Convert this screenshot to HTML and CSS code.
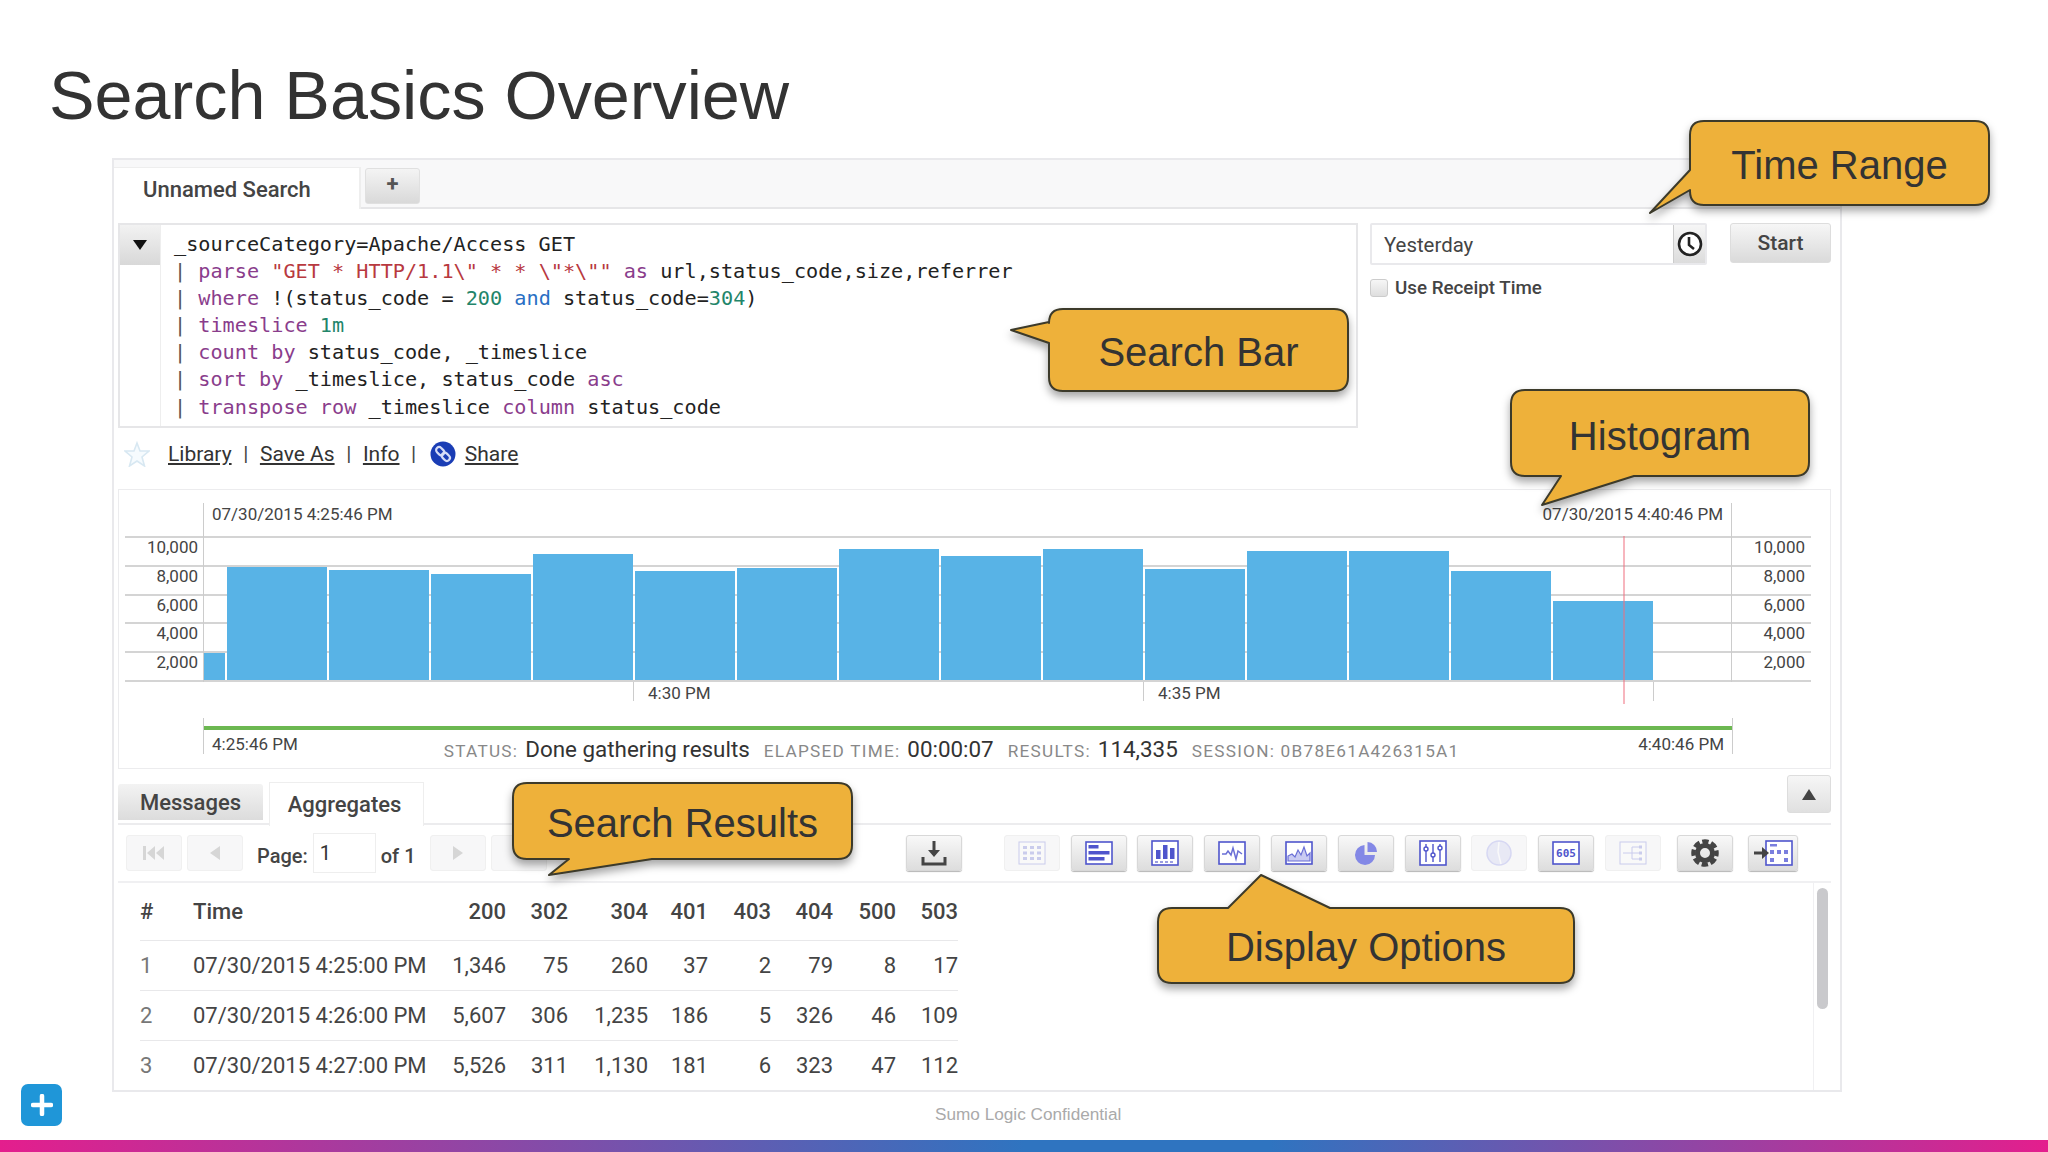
FILE: index.html
```html
<!DOCTYPE html>
<html lang="en">
<head>
<meta charset="utf-8">
<title>Search Basics Overview</title>
<link rel="stylesheet" href="styles.css">
</head>
<body>
<header class="slide-head"><h1 class="slide-title">Search Basics Overview</h1></header>
<main class="frame">
  <div class="tabbar">
    <div class="search-tab">Unnamed Search</div>
    <div class="add-tab">+</div>
  </div>
  <div class="search-row">
    <div class="query">
      <div class="gutter">
        <div class="toggle"><svg width="14" height="10" viewBox="0 0 14 10"><polygon points="0,0 14,0 7,10" fill="#111"/></svg></div>
      </div>
      <div class="code">
        <div class="code-line">_sourceCategory=Apache/Access GET</div>
        <div class="code-line"><span class="pipe">|</span> <span class="kw">parse</span> <span class="str">"GET * HTTP/1.1\" * * \"*\""</span> <span class="kw">as</span> url,status_code,size,referrer</div>
        <div class="code-line"><span class="pipe">|</span> <span class="kw">where</span> !(status_code = <span class="num">200</span> <span class="op">and</span> status_code=<span class="num">304</span>)</div>
        <div class="code-line"><span class="pipe">|</span> <span class="kw">timeslice</span> <span class="num">1m</span></div>
        <div class="code-line"><span class="pipe">|</span> <span class="kw">count by</span> status_code, _timeslice</div>
        <div class="code-line"><span class="pipe">|</span> <span class="kw">sort by</span> _timeslice, status_code <span class="kw">asc</span></div>
        <div class="code-line"><span class="pipe">|</span> <span class="kw">transpose row</span> _timeslice <span class="kw">column</span> status_code</div>
      </div>
    </div>
    <div class="time-col">
      <div class="time-top">
        <div class="time-input">
          <span class="time-value">Yesterday</span>
          <span class="time-clock"><svg width="28" height="28" viewBox="0 0 28 28"><circle cx="14" cy="14" r="11" fill="#fff" stroke="#222" stroke-width="2.6"/><path d="M13 7 V15 L18 19" fill="none" stroke="#222" stroke-width="2.6"/></svg></span>
        </div>
        <div class="start-btn">Start</div>
      </div>
      <label class="receipt"><span class="checkbox"></span>Use Receipt Time</label>
    </div>
  </div>
  <div class="links">
    <svg class="star" width="26" height="26" viewBox="0 0 26 26"><polygon points="13,2 16,10 25,10 18,16 20.5,25 13,20 5.5,25 8,16 1,10 10,10" fill="#f6fbfe" stroke="#d8e8f2" stroke-width="1.6"/></svg>
    <a class="link">Library</a><span class="sep">|</span><a class="link">Save As</a><span class="sep">|</span><a class="link">Info</a><span class="sep">|</span>
    <svg class="share-icon" width="26" height="26" viewBox="0 0 26 26"><circle cx="13" cy="13" r="12.5" fill="#1a3db5"/><g transform="rotate(45 13 13)" fill="none" stroke="#d5dcf7" stroke-width="2.200"><rect x="4.500" y="10" width="9" height="6" rx="3"/><rect x="12.500" y="10" width="9" height="6" rx="3"/></g></svg>
    <a class="link">Share</a>
  </div>
  <section class="hist">
    <div class="chart">
      <div class="axis">
        <span>10,000</span><span>8,000</span><span>6,000</span><span>4,000</span><span>2,000</span>
      </div>
      <div class="plot">
        <div class="plot-dates"><span>07/30/2015 4:25:46 PM</span><span>07/30/2015 4:40:46 PM</span></div>
        <div class="bars">
          <div class="bar bar-first" style="height:27px"></div>
          <div class="bar" style="height:113px"></div>
          <div class="bar" style="height:110px"></div>
          <div class="bar" style="height:106px"></div>
          <div class="bar" style="height:126px"></div>
          <div class="bar" style="height:109px"></div>
          <div class="bar" style="height:112px"></div>
          <div class="bar" style="height:131px"></div>
          <div class="bar" style="height:124px"></div>
          <div class="bar" style="height:131px"></div>
          <div class="bar" style="height:111px"></div>
          <div class="bar" style="height:129px"></div>
          <div class="bar" style="height:129px"></div>
          <div class="bar" style="height:109px"></div>
          <div class="bar" style="height:79px"></div>
        </div>
        <div class="now-line"></div>
      </div>
      <div class="axis axis-right">
        <span>10,000</span><span>8,000</span><span>6,000</span><span>4,000</span><span>2,000</span>
      </div>
    </div>
    <div class="ticks">
      <div class="tick">4:30 PM</div>
      <div class="tick">4:35 PM</div>
      <div class="tick tick-end"></div>
    </div>
    <div class="timeline">
      <div class="progress"></div>
      <div class="timeline-row">
        <span class="stamp">4:25:46 PM</span>
        <div class="status">
          <span class="st-label">Status:</span><span class="st-value">Done gathering results</span>
          <span class="st-label">Elapsed Time:</span><span class="st-value">00:00:07</span>
          <span class="st-label">Results:</span><span class="st-value">114,335</span>
          <span class="st-label">Session: 0B78E61A426315A1</span>
        </div>
        <span class="stamp">4:40:46 PM</span>
      </div>
    </div>
  </section>
  <section class="results">
    <div class="result-tabs">
      <div class="rtab rtab-off">Messages</div>
      <div class="rtab rtab-on">Aggregates</div>
      <div class="collapse"><svg width="14" height="11" viewBox="0 0 14 11"><polygon points="7,0 14,11 0,11" fill="#444"/></svg></div>
    </div>
    <div class="toolbar">
      <div class="btn off"><svg width="24" height="16" viewBox="0 0 24 16" fill="#d6d6d6"><rect x="1" y="1" width="3" height="14"/><polygon points="13,1 13,15 5,8"/><polygon points="22,1 22,15 14,8"/></svg></div>
      <div class="btn off"><svg width="16" height="16" viewBox="0 0 16 16" fill="#d6d6d6"><polygon points="13,1 13,15 3,8"/></svg></div>
      <span class="page-label">Page:</span>
      <span class="page-input">1</span>
      <span class="page-of">of 1</span>
      <div class="btn off"><svg width="16" height="16" viewBox="0 0 16 16" fill="#d6d6d6"><polygon points="3,1 3,15 13,8"/></svg></div>
      <div class="btn off"></div>
      <div class="btn download"><svg width="28" height="28" viewBox="0 0 28 28" fill="none" stroke="#444" stroke-width="3"><path d="M14 2 V16"/><path d="M8 11 L14 18 L20 11 Z" fill="#444" stroke="none"/><path d="M3 18 V25 H25 V18"/></svg></div>
      <div class="display-group">
        <div class="btn off"><svg width="28" height="24" viewBox="0 0 28 24" class="faded"><rect x="1" y="1" width="26" height="22" fill="#fff" stroke="#5a60d0"/><g fill="#5a60d0"><rect x="5" y="5" width="4" height="3"/><rect x="12" y="5" width="4" height="3"/><rect x="19" y="5" width="4" height="3"/><rect x="5" y="10.500" width="4" height="3"/><rect x="12" y="10.500" width="4" height="3"/><rect x="19" y="10.500" width="4" height="3"/><rect x="5" y="16" width="4" height="3"/><rect x="12" y="16" width="4" height="3"/><rect x="19" y="16" width="4" height="3"/></g></svg></div>
        <div class="btn"><svg width="28" height="24" viewBox="0 0 28 24"><rect x="1" y="1" width="26" height="22" fill="#fff" stroke="#4f55cc" stroke-width="1.600"/><g fill="#4f55cc"><rect x="3.500" y="4" width="10" height="3.500"/><rect x="3.500" y="10" width="21" height="3.500"/><rect x="3.500" y="16" width="16" height="3.500"/></g></svg></div>
        <div class="btn"><svg width="28" height="26" viewBox="0 0 28 26"><rect x="1" y="1" width="26" height="24" fill="#fff" stroke="#4f55cc" stroke-width="1.600"/><g fill="#4f55cc"><rect x="5" y="10" width="4.500" height="9"/><rect x="12" y="5" width="4.500" height="14"/><rect x="19" y="8" width="4.500" height="11"/></g><path d="M4 22 H24" stroke="#9a9de0" stroke-width="2" stroke-dasharray="3 2"/></svg></div>
        <div class="btn"><svg width="28" height="24" viewBox="0 0 28 24"><rect x="1" y="1" width="26" height="22" fill="#fff" stroke="#4f55cc" stroke-width="1.600"/><path d="M4 13 L8 13 L10 10 L13 14 L15 7 L18 18 L20 10 L24 13" fill="none" stroke="#6a6fd6" stroke-width="1.500"/></svg></div>
        <div class="btn"><svg width="28" height="24" viewBox="0 0 28 24"><rect x="1" y="1" width="26" height="22" fill="#fff" stroke="#4f55cc" stroke-width="1.600"/><path d="M3 20 V15 L7 13 L10 16 L13 9 L16 14 L19 6 L22 15 L25 12 V20 Z" fill="#c9cbf2" stroke="#6a6fd6" stroke-width="1.200"/></svg></div>
        <div class="btn"><svg width="24" height="24" viewBox="0 0 24 24" fill="#8388e6"><path d="M10.500 4 A10 10 0 1 0 21 14 H10.500 Z"/><path d="M13.500 1 A10 10 0 0 1 23 11 H13.500 Z"/></svg></div>
        <div class="btn"><svg width="28" height="26" viewBox="0 0 28 26"><rect x="1" y="1" width="26" height="24" fill="#fff" stroke="#4f55cc" stroke-width="1.600"/><path d="M7 4 V22 M14 4 V22 M21 4 V22" stroke="#4f55cc" stroke-width="1.400"/><g fill="#fff" stroke="#4f55cc" stroke-width="1.400"><circle cx="7" cy="9" r="2"/><circle cx="14" cy="15" r="2"/><circle cx="21" cy="8" r="2"/></g></svg></div>
        <div class="btn off"><svg width="26" height="26" viewBox="0 0 26 26" class="faded"><circle cx="13" cy="13" r="12" fill="#c4c6f0" stroke="#8388e6" stroke-width="1.500"/><path d="M13 2 L12 12 L15 24" stroke="#fff" stroke-width="1.500" fill="none"/></svg></div>
        <div class="btn"><svg width="28" height="24" viewBox="0 0 28 24"><rect x="1" y="1" width="26" height="22" fill="#fff" stroke="#4f55cc" stroke-width="1.600"/><text x="14" y="16" class="num-glyph">605</text></svg></div>
        <div class="btn off"><svg width="28" height="24" viewBox="0 0 28 24" class="faded"><rect x="1" y="1" width="26" height="22" fill="#fff" stroke="#5a60d0"/><path d="M4 12 H13 M13 6 V18 M13 6 H20 M13 12 H20 M13 18 H20" stroke="#5a60d0" fill="none"/><g fill="#5a60d0"><rect x="20" y="4.500" width="3" height="3"/><rect x="20" y="10.500" width="3" height="3"/><rect x="20" y="16.500" width="3" height="3"/></g></svg></div>
        <div class="btn btn-gear"><svg width="28" height="28" viewBox="0 0 28 28" fill="none" stroke="#444"><circle cx="14" cy="14" r="7.500" stroke-width="5"/><circle cx="14" cy="14" r="11.500" stroke-width="4.500" stroke-dasharray="6.300 2.730" stroke-dashoffset="3.100"/></svg></div>
        <div class="btn btn-move"><svg width="40" height="26" viewBox="0 0 40 26"><rect x="13" y="1" width="26" height="24" fill="#fff" stroke="#4f55cc" stroke-width="1.600"/><g fill="#7a7fde"><rect x="17" y="4" width="7" height="2.500"/><rect x="17" y="10" width="4" height="4"/><rect x="24" y="10" width="4" height="4"/><rect x="31" y="10" width="4" height="4"/><rect x="17" y="18" width="4" height="4"/><rect x="31" y="18" width="4" height="4"/></g><path d="M1 13 H10" stroke="#444" stroke-width="3"/><polygon points="9,7 16,13 9,19" fill="#444"/></svg></div>
      </div>
    </div>
    <div class="result-body">
      <table class="grid">
        <colgroup>
          <col class="c-idx"><col class="c-time"><col class="c-200"><col class="c-302"><col class="c-304"><col class="c-401"><col class="c-403"><col class="c-404"><col class="c-500"><col class="c-503">
        </colgroup>
        <thead>
          <tr><th class="left">#</th><th class="left">Time</th><th>200</th><th>302</th><th>304</th><th>401</th><th>403</th><th>404</th><th>500</th><th>503</th></tr>
        </thead>
        <tbody>
          <tr><td class="left idx">1</td><td class="left">07/30/2015 4:25:00 PM</td><td>1,346</td><td>75</td><td>260</td><td>37</td><td>2</td><td>79</td><td>8</td><td>17</td></tr>
          <tr><td class="left idx">2</td><td class="left">07/30/2015 4:26:00 PM</td><td>5,607</td><td>306</td><td>1,235</td><td>186</td><td>5</td><td>326</td><td>46</td><td>109</td></tr>
          <tr><td class="left idx">3</td><td class="left">07/30/2015 4:27:00 PM</td><td>5,526</td><td>311</td><td>1,130</td><td>181</td><td>6</td><td>323</td><td>47</td><td>112</td></tr>
        </tbody>
      </table>
      <div class="track"><div class="thumb"></div></div>
    </div>
  </section>
</main>
<footer class="foot">
  <div class="add-btn"><svg width="22" height="22" viewBox="0 0 22 22"><path d="M11 2 V20 M2 11 H20" stroke="#fff" stroke-width="4.500" stroke-linecap="round"/></svg></div>
  <span class="confidential">Sumo Logic Confidential</span>
</footer>
<div class="rainbow"></div>

<svg class="callouts" width="2048" height="1152" viewBox="0 0 2048 1152">
  <path d="M1704 121 H1975 Q1989 121 1989 135 V191 Q1989 205 1975 205 H1704 Q1690 205 1690 191 V190 L1650 213 L1690 170 V135 Q1690 121 1704 121 Z"/>
  <path d="M1063 309 H1334 Q1348 309 1348 323 V377 Q1348 391 1334 391 H1063 Q1049 391 1049 377 V343 L1011 330 L1049 322 V323 Q1049 309 1063 309 Z"/>
  <path d="M1525 390 H1795 Q1809 390 1809 404 V462 Q1809 476 1795 476 H1634 L1542 505 L1561 476 H1525 Q1511 476 1511 462 V404 Q1511 390 1525 390 Z"/>
  <path d="M527 783 H838 Q852 783 852 797 V845 Q852 859 838 859 H652 L549 875 L569 859 H527 Q513 859 513 845 V797 Q513 783 527 783 Z"/>
  <path d="M1172 908 H1228 L1261 875 L1330 908 H1560 Q1574 908 1574 922 V969 Q1574 983 1560 983 H1172 Q1158 983 1158 969 V922 Q1158 908 1172 908 Z"/>
</svg>
<div class="callout co-time">Time Range</div>
<div class="callout co-search">Search Bar</div>
<div class="callout co-hist">Histogram</div>
<div class="callout co-results">Search Results</div>
<div class="callout co-display">Display Options</div>
</body>
</html>
```
FILE: styles.css
```css
* { box-sizing: border-box; }
html, body { margin: 0; padding: 0; }
body {
  width: 2048px;
  height: 1152px;
  overflow: hidden;
  position: relative;
  display: flex;
  flex-direction: column;
  background: #fff;
  color: #333;
  font-family: Roboto, "Liberation Sans", sans-serif;
}

/* slide head */
.slide-head { height: 158px; padding: 56px 0 0 49px; }
.slide-title {
  margin: 0;
  font-family: "Liberation Sans", Arial, sans-serif;
  font-weight: 400;
  font-size: 68.300px;
  line-height: 78px;
  color: #333;
}

/* screenshot frame */
.frame {
  margin-left: 112px;
  width: 1730px;
  height: 934px;
  flex: none;
  border: 2px solid #e9e9ec;
  padding-right: 9px;
  overflow: hidden;
  background: #fff;
}
.tabbar {
  height: 49px;
  display: flex;
  align-items: flex-end;
  background: #f8f8f9;
  border-bottom: 2px solid #e6e6e8;
  margin-right: -9px;
}
.search-tab {
  width: 247px;
  height: 42px;
  margin-bottom: -2px;
  padding: 9px 0 0 29px;
  background: #fff;
  border-right: 2px solid #eee;
  border-top: 1px solid #eee;
  font-size: 22px;
  font-weight: 500;
  line-height: 26px;
  color: #444;
}
.add-tab {
  width: 55px;
  height: 36px;
  margin: 0 0 3px 4px;
  border-radius: 3px;
  background: linear-gradient(#f4f4f4, #d9d9d9);
  border: 1px solid #e0e0e0;
  text-align: center;
  font-size: 22px;
  font-weight: 700;
  line-height: 29px;
  color: #555;
}

/* search */
.search-row {
  display: flex;
  gap: 12px;
  margin: 14px 0 0 4px;
}
.query {
  width: 1240px;
  height: 205px;
  display: flex;
  border: 2px solid #e6e6e8;
  background: #fff;
}
.gutter { width: 41px; border-right: 1px solid #eee; flex: none; }
.toggle {
  height: 40px;
  display: flex;
  align-items: center;
  justify-content: center;
  background: linear-gradient(#f2f2f2, #d8d8d8);
}
.code {
  padding: 6px 0 0 13px;
  font-family: "DejaVu Sans Mono", "Liberation Mono", monospace;
  font-size: 20.200px;
  line-height: 27.100px;
  color: #222;
}
.code-line { white-space: pre; }
.pipe { color: #555; }
.kw { color: #8a3d8c; }
.str { color: #b8393f; }
.num { color: #23856a; }
.op { color: #2a6fc4; }

.time-col { width: 461px; }
.time-top { display: flex; align-items: flex-start; justify-content: space-between; }
.time-input {
  width: 337px;
  height: 42px;
  display: flex;
  border: 2px solid #e9e9ec;
  border-radius: 2px;
}
.time-value { flex: 1; padding-left: 12px; font-size: 20.400px; line-height: 40px; color: #444; }
.time-clock {
  width: 32px;
  display: flex;
  align-items: center;
  justify-content: center;
  background: linear-gradient(#f6f6f6, #dcdcdc);
  border-left: 1px solid #ccc;
}
.start-btn {
  width: 101px;
  height: 40px;
  border-radius: 3px;
  background: linear-gradient(#f6f6f6, #dadada);
  border: 1px solid #ddd;
  text-align: center;
  font-size: 21px;
  font-weight: 500;
  line-height: 38px;
  color: #444;
}
.receipt {
  display: flex;
  align-items: center;
  margin-top: 11px;
  font-size: 18.800px;
  font-weight: 500;
  line-height: 24px;
  color: #444;
}
.checkbox {
  width: 18px;
  height: 18px;
  margin-right: 7px;
  border: 1px solid #ccc;
  border-radius: 3px;
  background: linear-gradient(#f6f6f6, #dedede);
}

/* links */
.links {
  height: 61px;
  padding: 0 0 9px 10px;
  display: flex;
  align-items: center;
  font-size: 21px;
  color: #333;
}
.star { margin: 0 18px 0 0; }
.link { text-decoration: underline; }
.sep { margin: 0 11.600px; color: #444; }
.share-icon { margin: 0 9px 0 2px; }

/* histogram */
.hist {
  margin-left: 4px;
  height: 280px;
  border: 1px solid #ececee;
  padding: 13px 0 0 6px;
}
.chart { display: flex; height: 179px; }
.axis {
  width: 78px;
  margin-top: 33px;
  height: 146px;
  display: flex;
  flex-direction: column;
  align-items: stretch;
  padding-right: 5px;
  font-size: 17px;
  line-height: 23px;
  text-align: right;
  color: #444;
  background: repeating-linear-gradient(to bottom, #d4d4d4 0 2px, transparent 2px 28.800px);
  border-bottom: 2px solid #d4d4d4;
}
.axis span { height: 28.800px; }
.axis-right { width: 79px; padding-right: 6px; }
.plot {
  width: 1529px;
  flex: none;
  position: relative;
  border-left: 1px solid #ccc;
  border-right: 1px solid #ccc;
}
.plot-dates {
  height: 33px;
  display: flex;
  justify-content: space-between;
  padding: 0 8px;
  font-size: 17px;
  line-height: 22px;
  color: #444;
}
.bars {
  height: 146px;
  display: flex;
  align-items: flex-end;
  gap: 2px;
  border-bottom: 2px solid #d4d4d4;
  background: repeating-linear-gradient(to bottom, #d4d4d4 0 2px, transparent 2px 28.800px);
}
.bar { width: 100px; background: #58b3e6; flex: none; }
.bar-first { width: 21px; }
.now-line {
  position: absolute;
  left: 1419px;
  top: 33px;
  width: 2px;
  height: 168px;
  background: rgba(240, 110, 125, 0.5);
}
.ticks {
  height: 24px;
  display: flex;
  padding-left: 508px;
  font-size: 17px;
  color: #444;
}
.tick {
  width: 510px;
  height: 19px;
  flex: none;
  border-left: 1px solid #ccc;
  padding-left: 14px;
  line-height: 22px;
}
.tick-end { width: 1px; padding: 0; }
.timeline {
  margin: 12px 0 0 78px;
  padding-top: 8px;
  width: 1530px;
  height: 36px;
  border-left: 1px solid #ccc;
  border-right: 1px solid #ccc;
}
.progress { height: 4px; background: #6cb851; }
.timeline-row { display: flex; align-items: flex-start; padding: 0 8px; }
.stamp { font-size: 17px; line-height: 28px; color: #444; white-space: nowrap; }
.status {
  margin: 6px auto 0 146px;
  display: flex;
  align-items: baseline;
  white-space: nowrap;
}
.st-label {
  margin-right: 7px;
  font-size: 17.200px;
  letter-spacing: 1.250px;
  text-transform: uppercase;
  color: #888;
}
.st-value { margin-right: 14px; font-size: 22.400px; color: #333; }

/* results */
.results { margin: 9px 0 0 4px; }
.result-tabs {
  height: 47px;
  display: flex;
  align-items: flex-start;
  border-bottom: 2px solid #ececee;
}
.rtab { font-size: 22px; font-weight: 500; text-align: center; color: #444; }
.rtab-off {
  width: 145px;
  height: 36px;
  margin-top: 6px;
  border-radius: 3px 3px 0 0;
  background: linear-gradient(#f3f3f3, #dcdcdc);
  line-height: 37px;
}
.rtab-on {
  width: 155px;
  height: 44px;
  margin: 4px 0 -2px 6px;
  padding-right: 4px;
  background: #fff;
  border: 1px solid #eee;
  border-bottom: 0;
  line-height: 44px;
}
.collapse {
  width: 44px;
  height: 38px;
  margin: -3px 0 0 auto;
  display: flex;
  align-items: center;
  justify-content: center;
  border-radius: 3px;
  background: linear-gradient(#f6f6f6, #e0e0e0);
  border: 1px solid #ddd;
}
.toolbar {
  height: 58px;
  display: flex;
  align-items: center;
  padding: 0 0 0 8px;
  gap: 5px;
  border-bottom: 2px solid #f0f0f2;
  font-size: 20px;
  color: #444;
}
.btn {
  width: 56px;
  height: 36px;
  flex: none;
  display: flex;
  align-items: center;
  justify-content: center;
  border-radius: 3px;
  background: linear-gradient(#f8f8f8, #dddddd);
  border: 1px solid #d8d8d8;
  box-shadow: 0 1px 1px #b5b5b5;
}
.btn.off { background: #f7f7f8; border-color: #f0f0f0; box-shadow: none; }
.faded { opacity: 0.28; }
.page-label { margin-left: 9px; padding-top: 5px; font-weight: 500; }
.page-input {
  width: 63px;
  height: 40px;
  padding-left: 6px;
  border: 1px solid #eee;
  line-height: 38px;
  color: #333;
}
.page-of { width: 44px; padding-top: 5px; font-weight: 500; }
.download { margin-left: 354px; }
.display-group { display: flex; align-items: center; gap: 10.800px; margin-left: 37px; }
.btn-gear { margin-left: 5px; }
.btn-move { width: 50px; margin-left: 4px; }
.num-glyph {
  font-family: "DejaVu Sans Mono", monospace;
  font-size: 11px;
  font-weight: 700;
  fill: #4f55cc;
  text-anchor: middle;
}

.result-body { height: 208px; display: flex; }
.grid {
  margin-left: 22px;
  width: 818px;
  table-layout: fixed;
  border-collapse: collapse;
  align-self: flex-start;
  font-size: 22px;
  color: #444;
}
.c-idx { width: 53px; }
.c-time { width: 237px; }
.c-200 { width: 76px; }
.c-302 { width: 62px; }
.c-304 { width: 80px; }
.c-401 { width: 60px; }
.c-403 { width: 63px; }
.c-404 { width: 62px; }
.c-500 { width: 63px; }
.c-503 { width: 62px; }
.grid th, .grid td { padding: 0; text-align: right; white-space: nowrap; border-bottom: 1px solid #e8e8ea; }
.grid th { height: 57px; font-weight: 500; color: #444; }
.grid td { height: 50px; }
.grid .left { text-align: left; }
.grid .idx { color: #777; }
.track {
  margin-left: auto;
  width: 18px;
  border-left: 1px solid #f0f0f2;
  padding: 5px 0 0 3px;
}
.thumb { width: 11px; height: 121px; border-radius: 6px; background: #c9c9cc; }

/* footer */
.foot {
  height: 48px;
  flex: none;
  display: flex;
  align-items: center;
  padding-left: 21px;
}
.add-btn {
  width: 41px;
  height: 42px;
  margin-top: -22px;
  display: flex;
  align-items: center;
  justify-content: center;
  border-radius: 7px;
  background: #1f96d8;
  flex: none;
}
.confidential {
  margin: -3px 0 0 873px;
  font-family: "Liberation Sans", Arial, sans-serif;
  font-size: 17.200px;
  color: #aaa;
}
.rainbow {
  height: 12px;
  flex: none;
  background: linear-gradient(to right, #e41e8d 0%, #2f74c0 50%, #2f74c0 62%, #e41e8d 100%);
}

/* callouts */
.callouts {
  position: absolute;
  left: 0;
  top: 0;
  pointer-events: none;
  filter: drop-shadow(0 5px 4px rgba(0, 0, 0, 0.35));
}
.callouts path { fill: #eeb13a; stroke: #3c3a2a; stroke-width: 2; stroke-linejoin: round; }
.callout {
  position: absolute;
  display: flex;
  align-items: center;
  justify-content: center;
  font-family: "Liberation Sans", Arial, sans-serif;
  font-size: 40px;
  color: #333;
}
.co-time { left: 1690px; top: 123px; width: 299px; height: 84px; }
.co-search { left: 1049px; top: 311px; width: 299px; height: 82px; }
.co-hist { left: 1511px; top: 393px; width: 298px; height: 86px; }
.co-results { left: 513px; top: 785px; width: 339px; height: 76px; }
.co-display { left: 1158px; top: 910px; width: 416px; height: 75px; }
```
